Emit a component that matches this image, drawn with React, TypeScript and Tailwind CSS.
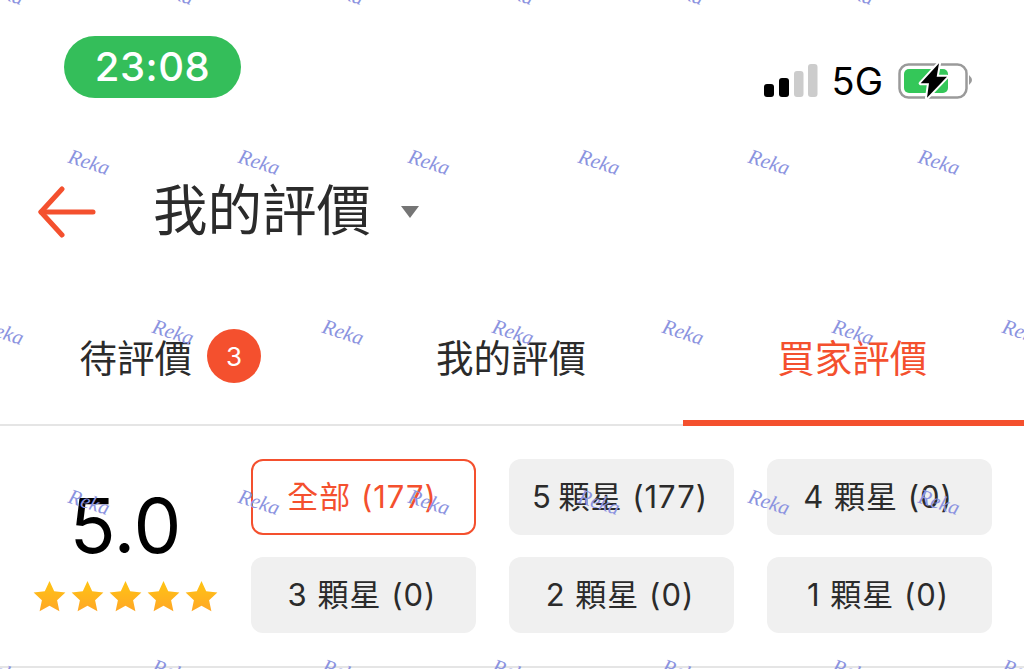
const FONT = "font-['Inter','Noto_Sans_CJK_TC',sans-serif]";

const FILTERS = [
  { label: '全部 (177)', active: true },
  { label: '5\u2009顆星 (177)', active: false },
  { label: '4 顆星 (0)', active: false },
  { label: '3 顆星 (0)', active: false },
  { label: '2 顆星 (0)', active: false },
  { label: '1 顆星 (0)', active: false },
];

// Watermark grid, staggered on every other row
const MARKS = [
  ...[-18, 152, 322, 492, 662, 832, 1002].map((x) => ({ x, y: -18 })),
  ...[68, 238, 408, 578, 748, 918].map((x) => ({ x, y: 152 })),
  ...[-18, 152, 322, 492, 662, 832, 1002].map((x) => ({ x, y: 322 })),
  ...[68, 238, 408, 578, 748, 918].map((x) => ({ x, y: 492 })),
  ...[-18, 152, 322, 492, 662, 832, 1002].map((x) => ({ x, y: 662 })),
];

function Signal() {
  return (
    <svg width="54" height="36" viewBox="0 0 54 36">
      <rect x="0" y="22" width="10" height="13" rx="3" fill="#000" />
      <rect x="15" y="16" width="10" height="19" rx="3" fill="#000" />
      <rect x="30" y="9" width="9.5" height="26" rx="3" fill="#ccc" />
      <rect x="44" y="2" width="9.5" height="33" rx="3" fill="#ccc" />
    </svg>
  );
}

function Battery() {
  return (
    <svg width="75" height="37" viewBox="0 0 75 37">
      <rect x="1.5" y="2.5" width="67" height="33" rx="9" fill="#fff" stroke="#9a9a9a" strokeWidth="2.5" />
      <rect x="6" y="7" width="44" height="24" rx="5" fill="#34c759" />
      <path d="M71 13 L73.5 16 Q74.5 18 73.5 20 L71 23 Z" fill="#9a9a9a" />
      <path
        d="M41 1.3 L22.7 21.3 L31 21.3 L29 35.7 L49 14.7 L38.7 14.7 Z"
        fill="#000"
        stroke="#fff"
        strokeWidth="4"
        strokeLinejoin="round"
        paintOrder="stroke"
      />
    </svg>
  );
}

function BackArrow() {
  return (
    <svg width="59" height="52" viewBox="0 0 59 52" fill="none" stroke="#f4502e" strokeWidth="5" strokeLinecap="round" strokeLinejoin="round">
      <path d="M55 26 H3" />
      <path d="M24 3 L3 26 L24 49" />
    </svg>
  );
}

function Star() {
  return (
    <svg width="33" height="33" viewBox="0 0 33 33">
      <defs>
        <linearGradient id="starFill" x1="0" y1="0" x2="0" y2="1">
          <stop offset="0" stopColor="#ffc413" />
          <stop offset="1" stopColor="#ffa726" />
        </linearGradient>
      </defs>
      <path
        d="M16.5 1 L21.2 11.3 L32.4 12.6 L24.1 20.2 L26.4 31.3 L16.5 25.7 L6.6 31.3 L8.9 20.2 L0.6 12.6 L11.8 11.3 Z"
        fill="url(#starFill)"
      />
    </svg>
  );
}

export default function App() {
  return (
    <div className={`relative h-[669px] w-[1024px] overflow-hidden bg-white ${FONT}`}>
      {/* Status bar */}
      <div className="flex h-[131px] items-start justify-between pl-[64px] pr-[51px] pt-[36px]">
        <div className="flex h-[62px] w-[177px] items-center justify-center rounded-full bg-[#34be5a] text-[40px] font-medium tracking-[0.5px] text-white">
          23:08
        </div>
        <div className="mt-[26px] flex items-start">
          <Signal />
          <span className="ml-[14px] mt-[1px] text-[38px] leading-[36px] text-black">5G</span>
          <div className="ml-[15px]">
            <Battery />
          </div>
        </div>
      </div>

      {/* Header */}
      <div className="flex h-[158px] items-start pl-[38px] pt-[55px]">
        <BackArrow />
        <h1 className="ml-[56px] text-[54.5px] font-normal leading-[48px] text-[#2b2b2b]">我的評價</h1>
        <div className="ml-[30px] mt-[20px] h-0 w-0 border-x-[9px] border-t-[12px] border-x-transparent border-t-[#757575]" />
      </div>

      {/* Tabs */}
      <div className="grid h-[137px] grid-cols-3 border-b-2 border-[#e5e5e5]">
        <div className="flex items-start justify-center gap-[15px] pr-[1px] pt-[43px]">
          <span className="text-[37.5px] leading-[54px] text-[#2b2b2b]">待評價</span>
          <span className="-mt-[3px] flex h-[54px] w-[54px] items-center justify-center rounded-full bg-[#f4502e] text-[26px] text-white">3</span>
        </div>
        <div className="flex items-start justify-center pr-[2px] pt-[43px]">
          <span className="text-[37.5px] leading-[54px] text-[#2b2b2b]">我的評價</span>
        </div>
        <div className="-mb-[2px] flex items-start justify-center border-b-[6px] border-[#f4502e] pr-[2px] pt-[43px]">
          <span className="text-[37.5px] leading-[54px] text-[#f4502e]">買家評價</span>
        </div>
      </div>

      {/* Rating summary */}
      <div className="flex h-[242px] items-start border-b-2 border-[#e5e5e5] pt-[33px]">
        <div className="flex w-[251px] flex-col items-center pt-[28px]">
          <span className="text-[76px] leading-[76px] text-black">5.0</span>
          <div className="mt-[17px] flex gap-[5px]">
            {[0, 1, 2, 3, 4].map((i) => (
              <Star key={i} />
            ))}
          </div>
        </div>
        <div className="grid grid-cols-[225px_225px_225px] gap-x-[33px] gap-y-[22px]">
          {FILTERS.map((f) => (
            <div
              key={f.label}
              className={
                f.active
                  ? 'flex h-[76px] items-center justify-center rounded-[12px] border-2 border-[#f4502e] pr-[3px] text-[31px] tracking-[1px] text-[#f4502e]'
                  : 'flex h-[76px] items-center justify-center rounded-[12px] bg-[#f0f0f0] pr-[3px] text-[31px] tracking-[1px] text-[#2b2b2b]'
              }
            >
              {f.label}
            </div>
          ))}
        </div>
      </div>

      {/* Watermark */}
      {MARKS.map((m) => (
        <span
          key={`${m.x}-${m.y}`}
          className="pointer-events-none absolute rotate-[18deg] font-['Liberation_Serif',serif] text-[21px] italic leading-none text-[#8b93e0]"
          style={{ left: m.x, top: m.y }}
        >
          Reka
        </span>
      ))}
    </div>
  );
}
